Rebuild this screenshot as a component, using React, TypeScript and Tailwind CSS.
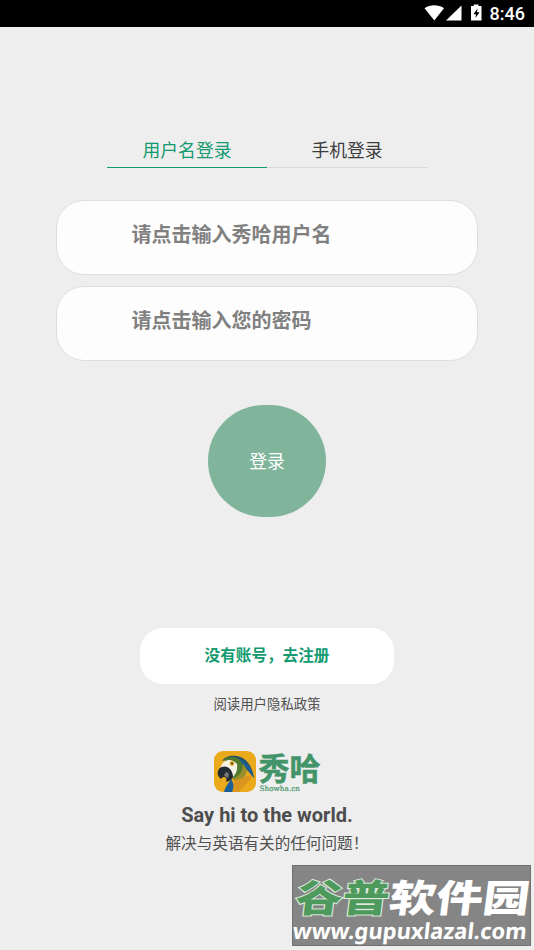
import type { ReactNode } from 'react'

const StatusBar = () => (
  <div className="flex h-[27px] items-center justify-end bg-black pr-[9px] text-white">
    <svg width="62" height="27" viewBox="0 0 62 27" fill="currentColor">
      <path d="M1.500 8.200C7.500 4.400 15 4.400 21 8.200L11.300 20.500Z" />
      <path d="M38.500 5.500V20.500H23Z" />
      <path d="M48 6H50.800V4.500H55.500V6H58.500V20.500H48Z" />
      <path d="M54.500 8.500L50.500 14.200H53L52.500 18L56.500 12.300H54Z" fill="#000" />
    </svg>
    <span className="ml-[5px] font-['Roboto',sans-serif] text-[18px] leading-[27px] font-medium">8:46</span>
  </div>
)

const Tab = ({ children, active }: { children: ReactNode; active?: boolean }) => (
  <div
    className={`h-[37px] w-40 border-b pt-[1px] text-center text-[17.8px] leading-[37px] ${
      active ? 'border-[#139a70] text-[#139a70]' : 'border-[#d8d8d8] text-[#3c3c3c]'
    }`}
  >
    {children}
  </div>
)

const Field = ({ label }: { label: string }) => (
  <div className="h-[75px] w-[422px] rounded-[28px] border border-[#dedede] bg-[#fdfdfd] pt-[1px] pl-[74.500px] text-[20px] leading-[66px] font-bold text-[#808080]">
    {label}
  </div>
)

const Parrot = () => (
  <svg width="42" height="41" viewBox="0 0 42 41">
    <defs>
      <clipPath id="tile">
        <rect width="42" height="41" rx="9" />
      </clipPath>
    </defs>
    <g clipPath="url(#tile)">
      <rect width="42" height="41" fill="#eba91c" />
      <path d="M21 28L38 24C38 30 29 34 25 41H17Z" fill="#d9951d" />
      <path d="M8 10C11 5 17 4 23 5C32 7 38 14 40 27C35 21 31 17 27 12L17 7Z" fill="#20506c" />
      <path d="M10 8C16 4 24 6 29 11C33 17 29 26 20 29L17 24L20 16L12 12Z" fill="#4f792e" />
      <path d="M29 13C33 17 34 22 30 26C26 29 22 29 18 28C26 25 29 20 29 13Z" fill="#98902a" />
      <path d="M25 8C33 11 38 18 40 27C35 21 33 16 28 12Z" fill="#1c609b" />
      <path d="M7 15C10 8 18 7 23 13C24 20 21 24 18 27C19 20 14 15 6 17Z" fill="#f5f1e5" />
      <path d="M5 18C10 13 18 16 19 25C19 28 16 30 12 31C14 27 10 24 7 28C3 25 3 21 5 18Z" fill="#252b32" />
      <path d="M12 21C15 21 16 25 13 27L10 24Z" fill="#777b79" />
      <circle cx="18" cy="12.500" r="2.400" fill="#e3ac1f" />
      <circle cx="18" cy="12.500" r=".9" fill="#172329" />
      <path d="M17 28C20 32 20 37 18 41H10C11 36 14 33 17 28Z" fill="#1c5e97" />
    </g>
  </svg>
)

const Logo = () => (
  <div className="flex h-[42px] items-start pl-[214px]">
    <Parrot />
    <div className="ml-[2.500px] flex flex-col text-[#44946a]">
      <span className="h-[33px] pt-[4px] text-[31px] leading-[29px] font-bold whitespace-nowrap [-webkit-text-stroke:0.5px_#44946a]">
        秀哈
      </span>
      <span className="pl-[1px] font-['DejaVu_Serif','Liberation_Serif',serif] text-[7.300px] leading-[9px] [-webkit-text-stroke:0.2px_#44946a]">
        Showha.cn
      </span>
    </div>
  </div>
)

const Watermark = () => (
  <div className="absolute top-[865px] left-[292px] h-[81px] w-[239px] border border-[#707070] bg-[#858585] whitespace-nowrap text-white">
    <div className="mt-[14px] ml-[3px] flex h-[38px] w-[190px] origin-left scale-x-[1.23] -skew-x-6 text-[38px] leading-[38px] font-black">
      <span className="text-[#4e9a5c] [-webkit-text-stroke:2px_#dcebdd] [paint-order:stroke_fill]">谷普</span>
      <span>软件园</span>
    </div>
    <div className="-mt-[2px] origin-left -skew-x-6 font-['Noto_Sans',sans-serif] text-[22px] leading-[28px] font-bold">
      www.gupuxlazal.com
    </div>
  </div>
)

const App = () => (
  <div className="relative h-[950px] w-[534px] overflow-hidden bg-[#eeeeee] font-['Roboto','Noto_Sans_CJK_SC',sans-serif]">
    <StatusBar />
    <div className="mt-[104px] flex justify-center">
      <Tab active>用户名登录</Tab>
      <Tab>手机登录</Tab>
    </div>
    <div className="mt-[32px] flex flex-col items-center gap-[11px]">
      <Field label="请点击输入秀哈用户名" />
      <Field label="请点击输入您的密码" />
    </div>
    <div className="mx-auto mt-[44px] h-[112px] w-[118px] rounded-full bg-[#80b59b] pt-[1px] text-center text-[17.8px] leading-[112px] text-white">
      登录
    </div>
    <div className="mx-auto mt-[111px] h-[56px] w-[254px] rounded-[23px] bg-white pt-[1px] text-center text-[15.600px] leading-[54px] font-bold text-[#139a70]">
      没有账号，去注册
    </div>
    <div className="mt-[10px] mb-[36px] text-center text-[13.400px] leading-[21px] text-[#505050]">阅读用户隐私政策</div>
    <Logo />
    <div className="mt-[10px] text-center text-[20px] leading-[25px] font-bold text-[#4d4d4d]">Say hi to the world.</div>
    <div className="mt-[4px] pl-[165.500px] text-[15.600px] leading-[24px] text-[#505050]">解决与英语有关的任何问题！</div>
    <Watermark />
  </div>
)

export default App
